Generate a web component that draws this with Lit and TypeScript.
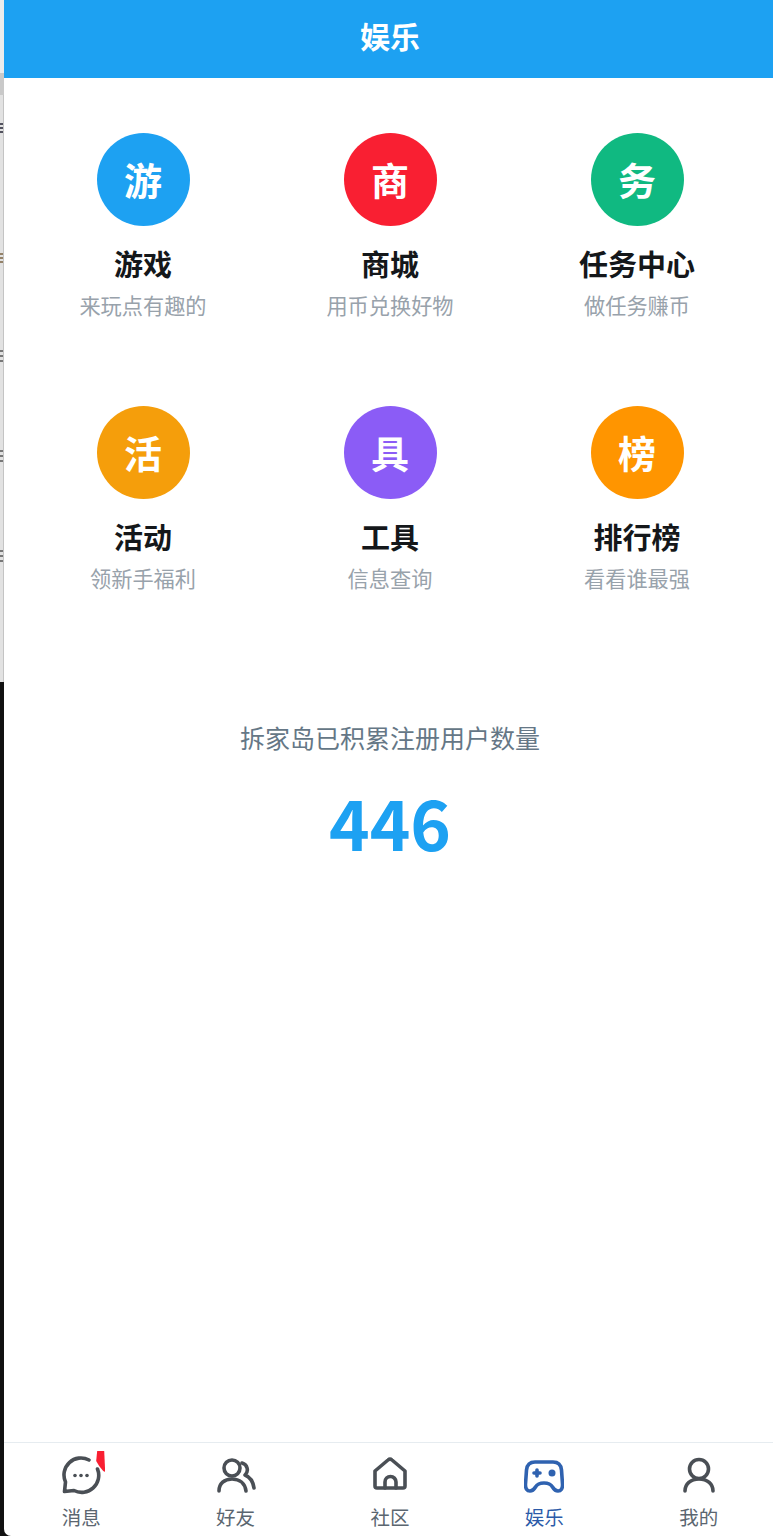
import { LitElement, html, css, svg } from "lit";
import { customElement } from "lit/decorators.js";

const cards = [
  { glyph: "游", title: "游戏", sub: "来玩点有趣的", color: "#1da1f2" },
  { glyph: "商", title: "商城", sub: "用币兑换好物", color: "#f91f32" },
  { glyph: "务", title: "任务中心", sub: "做任务赚币", color: "#10b981" },
  { glyph: "活", title: "活动", sub: "领新手福利", color: "#f59e0b" },
  { glyph: "具", title: "工具", sub: "信息查询", color: "#8b5cf6" },
  { glyph: "榜", title: "排行榜", sub: "看看谁最强", color: "#ff9500" },
];

const icons = {
  chat: svg`<path d="M28 5A17 17 0 0 0 4.500 27L3.500 36.500 13 35.500A17 17 0 0 0 36.500 14"/><circle class="dot" cx="14" cy="20.500" r="1.800"/><circle class="dot" cx="20" cy="20.500" r="1.800"/><circle class="dot" cx="26" cy="20.500" r="1.800"/>`,
  friends: svg`<circle cx="16" cy="13" r="8"/><path d="M3 36c0-7.500 5.500-12 13-12s13 4.500 14 12"/><path d="M26 8a7 7 0 0 1 3 12c5 2 8 6 9 13"/>`,
  home: svg`<path d="M5 16 18 5a3 3 0 0 1 4 0l13 11v15a2 2 0 0 1-2 2H7a2 2 0 0 1-2-2z"/><path d="M15 33v-6a5.500 5.500 0 0 1 11 0v6"/>`,
  game: svg`<path d="M11 7h18c5 0 8 3 8.500 8l1 14c.3 4.500-1.500 7-4.500 7-2.500 0-4-1.500-5.500-4-1.500-2.500-3-4-8.500-4s-7 1.500-8.500 4c-1.500 2.500-3 4-5.500 4-3 0-4.800-2.500-4.500-7l1-14C3 10 6 7 11 7z"/><path class="cross" d="M13 15v6M10 18h6"/><circle class="dot" cx="28" cy="18" r="3.500"/>`,
  me: svg`<circle cx="20" cy="14" r="9.500"/><path d="M6 36c0-7 5.500-12 14-12s14 5 14 12"/>`,
};

const tabs = [
  { icon: icons.chat, label: "消息", badge: true },
  { icon: icons.friends, label: "好友" },
  { icon: icons.home, label: "社区" },
  { icon: icons.game, label: "娱乐", active: true },
  { icon: icons.me, label: "我的" },
];

@customElement("app-root")
export class AppRoot extends LitElement {
  static styles = css`
    :host {
      display: flex;
      height: 1536px;
      background: #111;
      font-family: "Noto Sans CJK SC", "Noto Sans", sans-serif;
      overflow: hidden;
    }

    /* sliver of the window behind the phone view, its text is only cut-off marks */
    .edge {
      width: 4px;
      flex: none;
      display: flex;
      flex-direction: column;
      overflow: hidden;
    }
    .edge-top {
      height: 73px;
      background: #ececec;
    }
    .edge-bar {
      height: 22px;
      background: #c9c9c9;
    }
    .edge-page {
      height: 587px;
      background: #e2e2e2;
      border-right: 1px solid #c4c4c4;
      box-sizing: border-box;
    }
    .edge-page span {
      display: block;
      width: 3px;
      height: 12px;
      opacity: 0.75;
      background: repeating-linear-gradient(#555 0 2px, transparent 2px 5px);
    }
    .edge-page .first {
      margin-top: 28px;
      background: repeating-linear-gradient(#223 0 2px, transparent 2px 4px);
    }
    .edge-page .second {
      margin-top: 118px;
      background: repeating-linear-gradient(#7a6240 0 2px, transparent 2px 4px);
    }
    .edge-page .third {
      margin-top: 85px;
    }
    .edge-page .fourth {
      margin-top: 88px;
    }
    .edge-page .fifth {
      margin-top: 88px;
    }

    .screen {
      flex: 1;
      min-width: 0;
      display: flex;
      flex-direction: column;
      background: #fff;
      border-bottom-left-radius: 7px;
    }

    .header {
      height: 78px;
      flex: none;
      box-sizing: border-box;
      background: #1da1f2;
      color: #fff;
      font-size: 30px;
      font-weight: 700;
      display: flex;
      align-items: center;
      justify-content: center;
      padding: 0 0 8px 3px;
    }

    .grid {
      display: grid;
      grid-template-columns: repeat(3, 247px);
      row-gap: 43px;
      padding: 55px 0 0 15.5px;
    }
    .card {
      display: flex;
      flex-direction: column;
      align-items: center;
      height: 230px;
    }
    .circle {
      width: 93px;
      height: 93px;
      box-sizing: border-box;
      padding-bottom: 3px;
      border-radius: 50%;
      color: #fff;
      font-size: 38px;
      font-weight: 700;
      display: flex;
      align-items: center;
      justify-content: center;
    }
    .title {
      margin-top: 16px;
      font-size: 29px;
      line-height: 42px;
      font-weight: 700;
      color: #14171a;
    }
    .sub {
      margin-top: 6px;
      font-size: 21.2px;
      line-height: 30px;
      color: #98a2ab;
    }

    .stats {
      margin-top: 83px;
      padding-left: 3px;
      text-align: center;
    }
    .stats-label {
      font-size: 25px;
      line-height: 36px;
      color: #657786;
    }
    .stats-value {
      margin-top: 21px;
      font-size: 69px;
      line-height: 90px;
      font-weight: 700;
      color: #1da1f2;
    }

    .tabbar {
      margin-top: auto;
      height: 94px;
      flex: none;
      box-sizing: border-box;
      border-top: 1px solid #e6ecf0;
      display: grid;
      grid-template-columns: repeat(5, 154.4px);
    }
    .tab {
      display: flex;
      flex-direction: column;
      align-items: center;
      padding-top: 12px;
      color: #5b6670;
      font-size: 19.5px;
      line-height: 28px;
    }
    .tab.active {
      color: #2b5aa8;
    }
    .tab-icon {
      position: relative;
      width: 40px;
      height: 40px;
      margin-bottom: 8px;
    }
    .tab-icon svg {
      display: block;
      width: 40px;
      height: 40px;
      fill: none;
      stroke: #4a4f55;
      stroke-width: 3.6;
      stroke-linecap: round;
      stroke-linejoin: round;
    }
    .tab.active svg {
      stroke: #2f62b0;
    }
    .dot {
      fill: #4a4f55;
      stroke: none;
    }
    .tab.active .dot {
      fill: #2f62b0;
    }
    .badge {
      position: absolute;
      top: -4px;
      left: 35px;
      width: 9px;
      height: 21px;
      background: #f91f32;
      clip-path: polygon(11% 0, 89% 0, 100% 100%, 78% 95%, 33% 71%, 0 48%);
    }
  `;

  render() {
    return html`
      <div class="edge">
        <div class="edge-top"></div>
        <div class="edge-bar"></div>
        <div class="edge-page">
          <span class="first"></span>
          <span class="second"></span>
          <span class="third"></span>
          <span class="fourth"></span>
          <span class="fifth"></span>
        </div>
      </div>
      <div class="screen">
        <div class="header">娱乐</div>
        <div class="grid">
          ${cards.map(
            (c) => html`
              <div class="card">
                <div class="circle" style="background: ${c.color}">${c.glyph}</div>
                <div class="title">${c.title}</div>
                <div class="sub">${c.sub}</div>
              </div>
            `
          )}
        </div>
        <div class="stats">
          <div class="stats-label">拆家岛已积累注册用户数量</div>
          <div class="stats-value">446</div>
        </div>
        <div class="tabbar">
          ${tabs.map(
            (t) => html`
              <div class="tab ${t.active ? "active" : ""}">
                <div class="tab-icon">
                  <svg viewBox="0 0 40 40">${t.icon}</svg>
                  ${t.badge ? html`<span class="badge"></span>` : ""}
                </div>
                <span>${t.label}</span>
              </div>
            `
          )}
        </div>
      </div>
    `;
  }
}
